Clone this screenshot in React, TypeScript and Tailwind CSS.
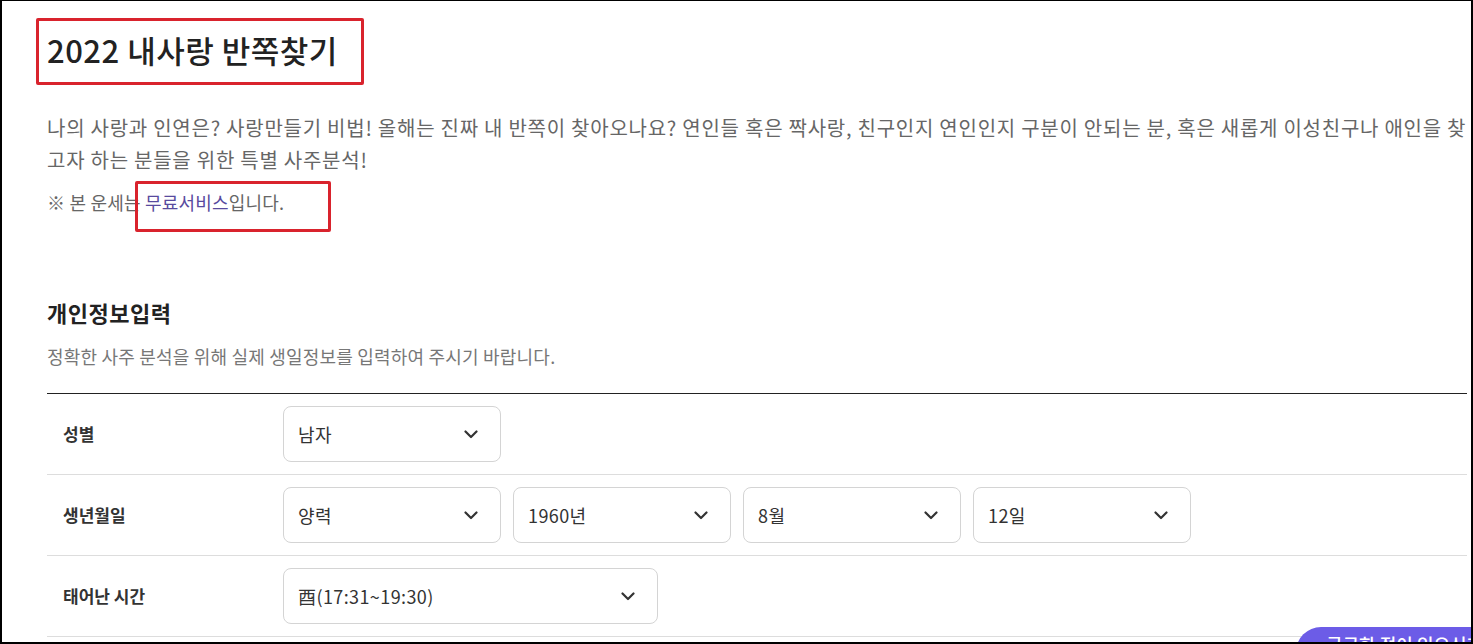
import React from "react";

const FONT = '"Noto Sans CJK KR", "Noto Sans", sans-serif';

function Chevron() {
  return (
    <svg width="14" height="9" viewBox="0 0 14 9" fill="none" className="shrink-0">
      <path d="M1.5 1.5 7 7l5.5-5.5" stroke="#333" strokeWidth="2.2" strokeLinecap="round" strokeLinejoin="round" />
    </svg>
  );
}

function Select({ value, wide }: { value: string; wide?: boolean }) {
  return (
    <div
      className={`flex items-center justify-between h-[56px] ${wide ? "w-[375px]" : "w-[218px]"} rounded-lg border border-[#d4d4d4] bg-white pl-[14px] pr-[22px] text-[18px] tracking-[0.4px] text-[#333]`}
    >
      <span>{value}</span>
      <Chevron />
    </div>
  );
}

function Row({ label, children }: { label: string; children: React.ReactNode }) {
  return (
    <div className="flex items-center h-[81px] border-b border-[#dddddd]">
      <div className="w-[236px] shrink-0 pl-[16px] text-[17px] font-bold text-[#333]">{label}</div>
      <div className="flex gap-[12px]">{children}</div>
    </div>
  );
}

export default function App() {
  return (
    <div
      className="relative h-[644px] w-[1473px] overflow-hidden bg-white border-l-2 border-r-2 border-t border-b-2 border-black"
      style={{ fontFamily: FONT }}
    >
      <div className="pl-[45px] pr-[4px] pt-[29px]">
        <h1 className="text-[31px] leading-[40px] tracking-[0.5px] font-medium text-[#222]">2022 내사랑 반쪽찾기</h1>
        <p className="mt-[42px] text-[20px] leading-[32px] tracking-[0.75px] text-[#666]">
          나의 사랑과 인연은? 사랑만들기 비법! 올해는 진짜 내 반쪽이 찾아오나요? 연인들 혹은 짝사랑, 친구인지 연인인지 구분이 안되는 분, 혹은 새롭게 이성친구나 애인을 찾고자 하는 분들을 위한 특별 사주분석!
        </p>
        <p className="mt-[11px] text-[18px] leading-[30px] tracking-[0.2px] text-[#666]">
          ※ 본 운세는 <span className="text-[#584a9e]">무료서비스</span>입니다.
        </p>
        <h2 className="mt-[80px] text-[22px] leading-[30px] tracking-[0.5px] font-bold text-[#222]">개인정보입력</h2>
        <p className="mt-[17px] text-[18px] leading-[24px] tracking-[0.2px] text-[#777]">
          정확한 사주 분석을 위해 실제 생일정보를 입력하여 주시기 바랍니다.
        </p>
        <div className="mt-[25px] border-t border-[#222]">
          <Row label="성별">
            <Select value="남자" />
          </Row>
          <Row label="생년월일">
            <Select value="양력" />
            <Select value="1960년" />
            <Select value="8월" />
            <Select value="12일" />
          </Row>
          <Row label="태어난 시간">
            <Select value="酉(17:31~19:30)" wide />
          </Row>
        </div>
      </div>

      {/* annotation boxes */}
      <div className="absolute left-[34px] top-[17px] w-[328px] h-[67px] border-[3px] border-[#d9232d] rounded-[2px]" />
      <div className="absolute left-[133px] top-[180px] w-[196px] h-[51px] border-[3px] border-[#d9232d] rounded-[2px]" />

      {/* floating button */}
      <div className="absolute left-[1294px] top-[626px] h-[50px] w-[260px] rounded-l-full bg-[#6c5ce7] pl-[30px] pt-[4px] text-[18px] font-medium text-white">
        궁금한 점이 있으신가요?
      </div>
    </div>
  );
}
